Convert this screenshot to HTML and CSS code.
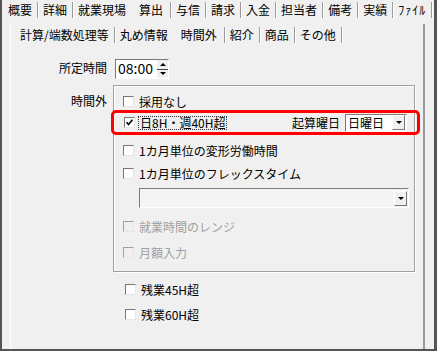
FILE: index.html
```html
<!doctype html>
<html>
 <head>
  <meta charset="utf-8">
  <title>算出 - 時間外</title>
  <link rel="stylesheet" href="styles.css">
 </head>
 <body>
  <div class="window">
   <div class="tabs main-tabs">
    <span class="tab">概要</span>
    <span class="tab">詳細</span>
    <span class="tab before-active">就業現場</span>
    <span class="tab active">算出</span>
    <span class="tab">与信</span>
    <span class="tab">請求</span>
    <span class="tab">入金</span>
    <span class="tab">担当者</span>
    <span class="tab">備考</span>
    <span class="tab">実績</span>
    <span class="tab narrow-kana">ﾌｧｲﾙ</span>
   </div>
   <div class="tab-body">
    <div class="tabs sub-tabs">
     <span class="tab">計算/端数処理等</span>
     <span class="tab before-active">丸め情報</span>
     <span class="tab active">時間外</span>
     <span class="tab">紹介</span>
     <span class="tab">商品</span>
     <span class="tab">その他</span>
    </div>
    <div class="panel">
     <div class="form">
      <label class="field-label">所定時間</label>
      <div class="spin">
       <span class="spin-value">08:00</span>
       <span class="spin-btns">
        <span class="spin-btn"><i class="arrow-up"></i></span>
        <span class="spin-btn"><i class="arrow-down"></i></span>
       </span>
      </div>

      <label class="field-label overtime-label">時間外</label>
      <div class="group">
       <div class="check-row first">
        <span class="cb"></span><span>採用なし</span>
       </div>
       <div class="check-row marked">
        <span class="cb checked">
         <svg width="9" height="9" viewBox="0 0 9 9"><path d="M1.5 4.2 L3.5 6.5 L7.5 1.8" fill="none" stroke="#000" stroke-width="1.6"/></svg>
        </span>
        <span class="focus">日8H・週40H超</span>
        <span class="spacer"></span>
        <span class="inline-label">起算曜日</span>
        <div class="combo combo-day">
         <span class="combo-text">日曜日</span>
         <span class="combo-btn"><i class="arrow-down"></i></span>
        </div>
       </div>
       <div class="check-row">
        <span class="cb"></span><span>1カ月単位の変形労働時間</span>
       </div>
       <div class="check-row">
        <span class="cb"></span><span>1カ月単位のフレックスタイム</span>
       </div>
       <div class="combo combo-flex">
        <span class="combo-text"></span>
        <span class="combo-btn"><i class="arrow-down"></i></span>
       </div>
       <div class="check-row disabled spaced">
        <span class="cb"></span><span>就業時間のレンジ</span>
       </div>
       <div class="check-row disabled spaced">
        <span class="cb"></span><span>月額入力</span>
       </div>
      </div>

      <div class="extra">
       <div class="check-row">
        <span class="cb"></span><span>残業45H超</span>
       </div>
       <div class="check-row">
        <span class="cb"></span><span>残業60H超</span>
       </div>
      </div>
     </div>
    </div>
   </div>
  </div>
 </body>
</html>
```

FILE: styles.css
```css
body {
  margin: 0;
  background: #f0f0f0;
  font-family: "Noto Sans CJK JP", sans-serif;
  font-size: 12px;
  color: #000;
}

.window {
  width: 437px;
  height: 351px;
  box-sizing: border-box;
  border-left: 2px solid #555;
  border-right: 3px solid #555;
  border-bottom: 2px solid #555;
  display: flex;
  flex-direction: column;
}

/* tab strips */
.tabs {
  display: flex;
  align-items: center;
  white-space: nowrap;
}

.tab {
  flex-shrink: 0;
  padding: 0 5px;
  line-height: 16px;
  border-right: 1px solid #9a9a9a;
  box-shadow: 1px 0 0 #fff;
}

.tab.before-active {
  border-right-color: transparent;
  box-shadow: none;
}

.tab.active {
  padding: 0 7px;
}

.main-tabs {
  height: 20px;
  padding-left: 1px;
}

.narrow-kana {
  letter-spacing: 1px;
}

.tab-body {
  flex: 1;
  margin: 4px 9px 0 8px;
  border-left: 1px solid #fff;
  border-right: 2px solid #9a9a9a;
  display: flex;
  flex-direction: column;
}

.sub-tabs {
  height: 21px;
  padding-left: 4px;
}

/* form */
.panel {
  flex: 1;
  padding-top: 14px;
}

.form {
  display: grid;
  grid-template-columns: 96px 302px;
  column-gap: 6px;
  row-gap: 6px;
  align-items: start;
}

.field-label {
  text-align: right;
  line-height: 18px;
}

.overtime-label {
  margin-top: 7px;
}

.spin {
  display: flex;
  margin-left: 2px;
  width: 52px;
  height: 18px;
  border: 1px solid #7a7a7a;
  border-right-color: #fff;
  border-bottom-color: #fff;
  background: #fff;
}

.spin-value {
  width: 40px;
  font-size: 14px;
  line-height: 17px;
  padding-left: 2px;
}

.spin-btns {
  display: flex;
  flex-direction: column;
  width: 11px;
  background: #f0f0f0;
}

.spin-btn {
  flex: 1;
  display: flex;
  align-items: center;
  justify-content: center;
}

.spin-btn + .spin-btn {
  border-top: 1px solid #444;
}

.arrow-up,
.arrow-down {
  width: 0;
  height: 0;
  border-left: 3px solid transparent;
  border-right: 3px solid transparent;
}

.arrow-up {
  border-bottom: 3px solid #000;
}

.arrow-down {
  border-top: 3px solid #000;
}

/* group box */
.group {
  border: 1px solid #a0a0a0;
  box-shadow: inset 1px 1px 0 #fff, 1px 1px 0 #fff;
  padding: 7px 8px 11px 9px;
  display: flex;
  flex-direction: column;
}

.check-row {
  display: flex;
  align-items: center;
  height: 16px;
  margin-top: 7px;
  white-space: nowrap;
}

.check-row.first {
  margin-top: 0;
}

.cb {
  flex-shrink: 0;
  width: 9px;
  height: 9px;
  margin-right: 5px;
  border-top: 1px solid #777;
  border-left: 1px solid #777;
  border-right: 1px solid #e6e6e6;
  border-bottom: 1px solid #e6e6e6;
  background: #fff;
  display: flex;
  align-items: center;
  justify-content: center;
}

.check-row.disabled {
  color: #a0a0a0;
}

.check-row.disabled .cb {
  background: #f0f0f0;
  border-top-color: #a0a0a0;
  border-left-color: #a0a0a0;
}

.check-row.spaced {
  margin-top: 10px;
}

/* the row marked in red */
.check-row.marked {
  height: 19px;
  margin: 1px -14px 0 -12px;
  padding: 0 10px 0 10px;
  border: 3px solid #f00;
  border-radius: 5px;
}

.focus {
  border: 1px dotted #333;
  padding: 0 1px;
  line-height: 12px;
  margin-left: -2px;
}

.spacer {
  flex: 1;
}

.inline-label {
  margin-right: 5px;
}

.combo {
  display: flex;
  align-items: center;
  box-sizing: border-box;
  border: 1px solid #7a7a7a;
  border-right-color: #fff;
  border-bottom-color: #fff;
  background: #fff;
}

.combo-day {
  width: 62px;
  height: 18px;
}

.combo-flex {
  width: 270px;
  height: 20px;
  margin: 7px 0 0 16px;
  background: #f4f4f4;
}

.combo-text {
  flex: 1;
  padding-left: 2px;
  line-height: 16px;
}

.combo-btn {
  width: 11px;
  height: 13px;
  margin-right: 1px;
  border: 1px solid #fff;
  border-right-color: #777;
  border-bottom-color: #777;
  background: #f0f0f0;
  display: flex;
  align-items: center;
  justify-content: center;
}

.extra {
  grid-column: 2;
  padding: 3px 0 0 12px;
}

.extra .check-row {
  margin-top: 9px;
}

.extra .check-row:first-child {
  margin-top: 0;
}
```
